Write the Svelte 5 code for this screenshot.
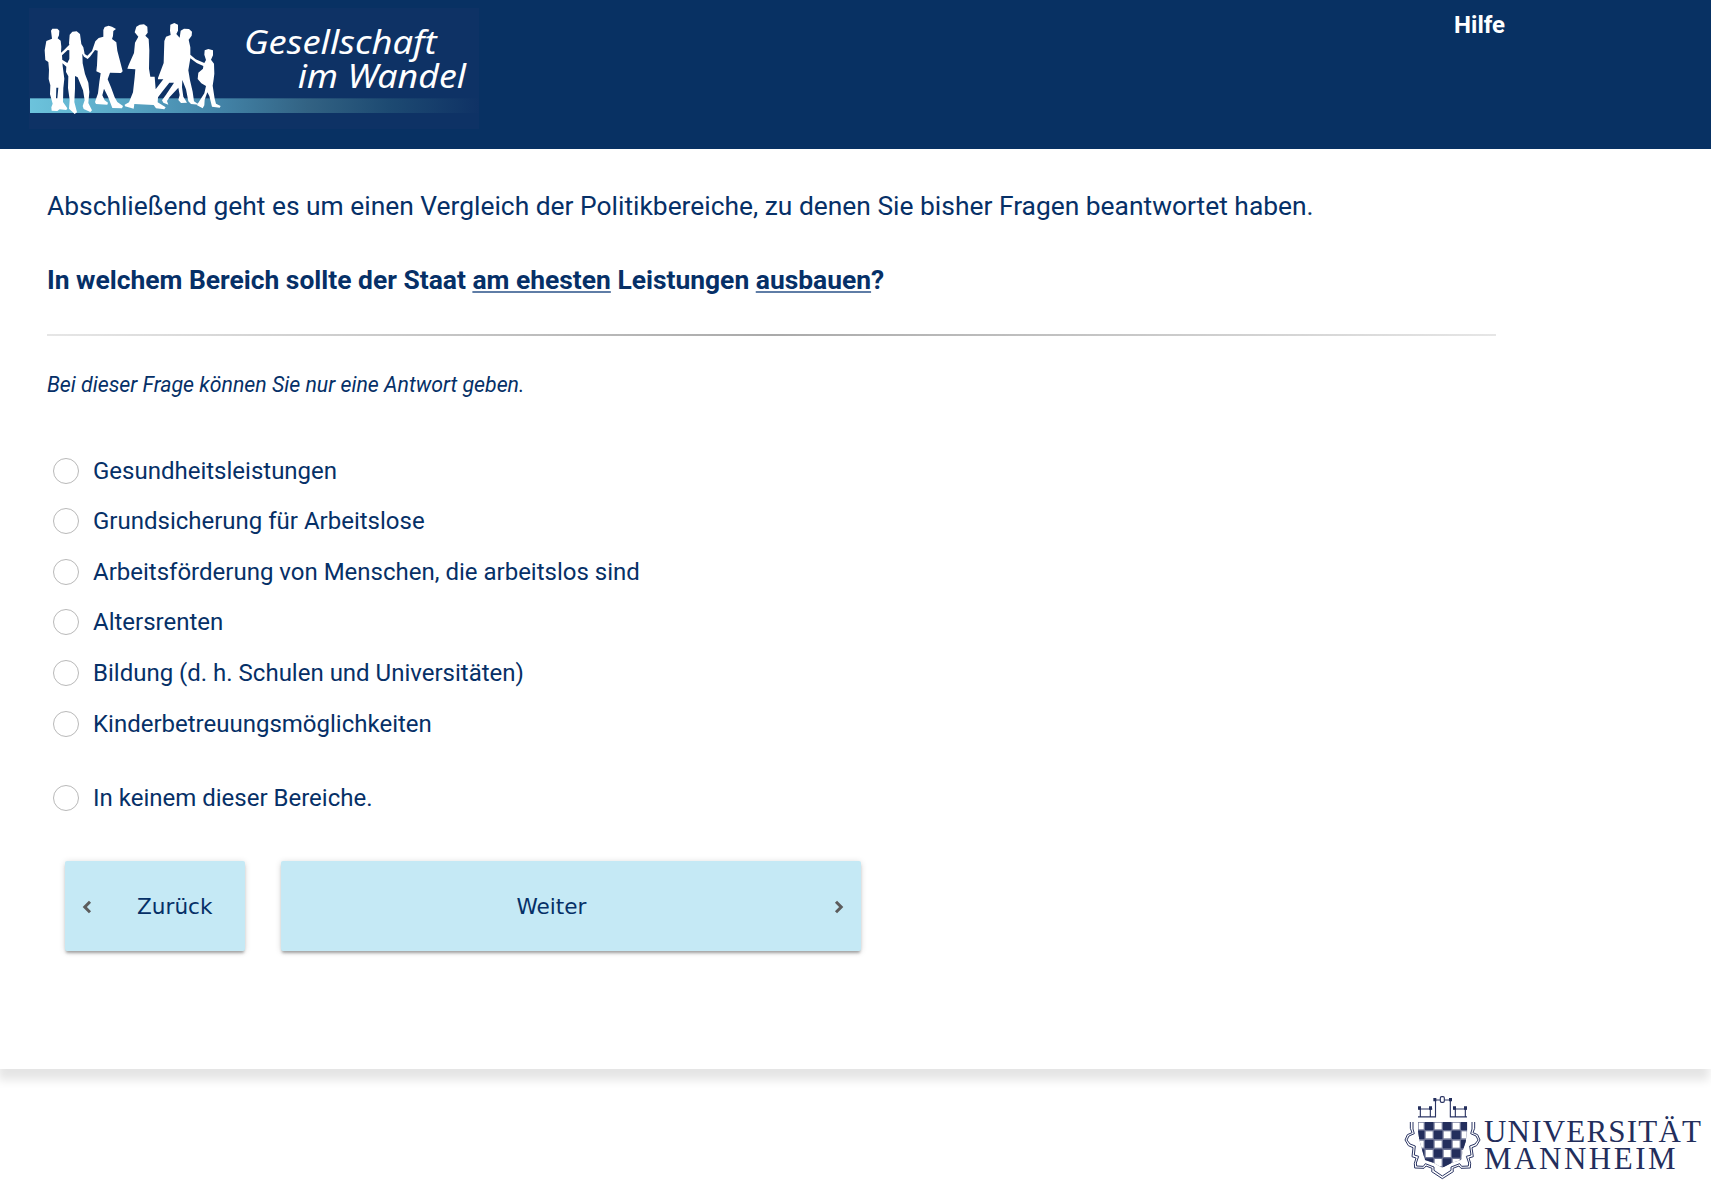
<script>
  const options = [
    'Gesundheitsleistungen',
    'Grundsicherung für Arbeitslose',
    'Arbeitsförderung von Menschen, die arbeitslos sind',
    'Altersrenten',
    'Bildung (d. h. Schulen und Universitäten)',
    'Kinderbetreuungsmöglichkeiten',
    'In keinem dieser Bereiche.'
  ];

  // Checkerboard cells of the university crest, clipped to the shield outline
  const columns = [
    [114, 19], [135, 25], [162, 25], [189, 25], [216, 25], [243, 19]
  ];
  const rows = [
    [186, 24], [212, 25], [240, 25], [268, 25], [295, 26]
  ];
</script>

<header>
  <svg class="brand" viewBox="27 24 1350 363" aria-label="Gesellschaft im Wandel">
    <defs>
      <linearGradient id="band" x1="0" x2="1">
        <stop offset="0" stop-color="#6cc3dc" />
        <stop offset=".16" stop-color="#5eaecb" />
        <stop offset=".42" stop-color="#4384a8" />
        <stop offset=".62" stop-color="#326283" />
        <stop offset=".8" stop-color="#1d4a72" />
        <stop offset="1" stop-color="#0f3265" />
      </linearGradient>
    </defs>
    <rect class="plate" x="27" y="24" width="1350" height="363" />
    <rect x="30" y="295" width="1347" height="44" fill="url(#band)" />
    <g class="people">
      <path d="M93 92 L97 86 L112 86 L118 92 L117 106 L113 115 L122 122 L124 140 L123 158 L130 152 L148 134 L147 130 L149 104 L157 95 L170 94 L180 102 L184 132 L190 142 L194 162 L202 167 L216 153 L226 124 L236 114 L250 110 L250 90 L254 81 L266 77 L276 80 L288 87 L280 93 L279 108 L276 117 L289 127 L292 152 L308 214 L303 219 L270 218 L263 238 L273 262 L284 292 L292 306 L309 318 L306 325 L277 324 L264 290 L252 266 L247 286 L254 301 L264 308 L262 314 L228 312 L225 306 L234 280 L238 246 L242 220 L229 214 L231 196 L233 152 L225 150 L210 170 L203 177 L192 170 L187 161 L188 190 L195 222 L205 248 L208 276 L205 309 L216 331 L211 336 L191 327 L188 318 L194 301 L189 271 L173 232 L165 228 L165 266 L163 306 L171 337 L164 342 L147 326 L149 300 L144 264 L145 229 L138 216 L139 200 L121 184 L123 177 L142 189 L148 177 L148 151 L143 150 L126 166 L128 198 L133 236 L130 264 L129 306 L142 325 L139 330 L119 328 L112 333 L95 332 L94 322 L98 311 L90 283 L91 256 L86 237 L87 209 L85 186 L76 180 L74 151 L79 123 L96 116Z" />
      <path d="M344 97 L349 80 L359 74 L372 73 L382 80 L383 98 L376 107 L386 117 L388 151 L387 206 L391 230 L404 230 L407 268 L430 238 L414 238 L414 234 L431 189 L433 123 L438 110 L452 105 L450 92 L451 74 L463 69 L474 74 L474 92 L469 102 L479 113 L482 92 L492 86 L507 87 L516 95 L515 107 L506 119 L511 142 L511 164 L527 178 L553 189 L558 180 L553 164 L554 151 L565 147 L579 151 L579 166 L573 179 L582 191 L583 221 L581 238 L578 257 L584 296 L588 311 L602 318 L599 323 L576 320 L568 288 L562 277 L554 299 L553 316 L548 325 L530 315 L536 307 L553 280 L558 258 L544 250 L533 237 L535 218 L549 206 L550 198 L530 189 L511 175 L505 211 L510 241 L518 275 L522 304 L537 314 L513 312 L505 304 L498 268 L487 240 L486 262 L490 290 L501 308 L483 309 L475 300 L479 285 L475 263 L449 291 L441 303 L445 314 L430 308 L426 301 L438 284 L462 248 L448 248 L426 276 L414 292 L413 307 L437 322 L433 328 L408 325 L401 315 L343 312 L341 326 L315 319 L314 314 L327 307 L339 277 L344 232 L346 208 L322 206 L326 195 L342 159 L345 128 L355 110Z" />
    </g>
    <path class="gap" d="M109 263 L115 263 L112 295 L108 295Z" />
    <text x="672" y="162" textLength="578" lengthAdjust="spacingAndGlyphs">Gesellschaft</text>
    <text x="833" y="263" textLength="505" lengthAdjust="spacingAndGlyphs">im Wandel</text>
  </svg>
  <a class="help" href="#hilfe">Hilfe</a>
</header>

<main>
  <p class="intro">Abschließend geht es um einen Vergleich der Politikbereiche, zu denen Sie bisher Fragen beantwortet haben.</p>
  <h1>In welchem Bereich sollte der Staat <u>am ehesten</u> Leistungen <u>ausbauen</u>?</h1>
  <div class="divider"></div>
  <p class="hint">Bei dieser Frage können Sie nur eine Antwort geben.</p>

  <div class="options">
    {#each options as option}
      <label>
        <input type="radio" name="bereich" />
        <span>{option}</span>
      </label>
    {/each}
  </div>

  <div class="actions">
    <button class="back">
      <svg viewBox="0 0 12 14"><path d="M9 1.8 L3.8 7 L9 12.2" /></svg>
      <span>Zurück</span>
    </button>
    <button class="next">
      <span>Weiter</span>
      <svg viewBox="0 0 12 14"><path d="M3 1.8 L8.2 7 L3 12.2" /></svg>
    </button>
  </div>
</main>

<footer>
  <svg class="university" viewBox="60 90 933 282" aria-label="Universität Mannheim">
    <defs>
      <clipPath id="shield">
        <path d="M114 186 H262 V212 L257 245 L249 270 L243 300 L216 308 L187 323 L160 308 L135 300 L127 272 L118 240 L114 212Z" />
      </clipPath>
    </defs>
    <g clip-path="url(#shield)">
      <rect class="ground" x="112" y="184" width="152" height="140" />
      {#each rows as [y, h], r}
        {#each columns as [x, w], c}
          {#if (r + c) % 2 === 0}
            <rect class="light" x={x + 2} y={y + 2} width={w - 4} height={h - 4} />
          {:else}
            <rect class="dark" x={x} y={y} width={w} height={h} />
          {/if}
        {/each}
      {/each}
    </g>
    <path class="line" d="M114 170.500 H166.500 V120 H181 M193 120 H211 V170.500 H261 M121 145 V169 M151 145 V169 M116 147 H157 M226 145 V169 M256 145 V169 M220 147 H261" />
    <rect class="line" x="181" y="110" width="12" height="17" rx="4" />
    <path class="dark" d="M114 139h9v10h-9z M147 139h9v10h-9z M219 139h9v10h-9z M252 139h9v10h-9z M160 114h9v10h-9z M207 114h9v10h-9z" />
    <path class="border" d="M91 186 V205 L96 218 L82 224 L75 240 L85 257 L99 263 L96 290 L108 294 L103 310 L104 324 L132 325 L138 318 L156 325 L155 335 L187 356 L220 335 L219 325 L237 318 L243 325 L271 324 L272 310 L267 294 L280 290 L276 263 L290 257 L300 240 L293 224 L279 218 L284 205 V186" />
    <path class="border" d="M99 186 V207 L103 221 L87 228 L81 240 L90 252 L106 258 L103 285 L116 289 L109 309 L110 318 L130 319 L136 311 L162 321 L162 331 L187 348 L213 331 L213 321 L239 311 L245 319 L265 318 L266 309 L259 289 L273 285 L269 258 L285 252 L294 240 L288 228 L272 221 L276 207 V186" />
    <text x="312" y="246" textLength="651">UNIVERSITÄT</text>
    <text x="312" y="326" textLength="575">MANNHEIM</text>
  </svg>
</footer>

<style>
  :global(body) {
    background: #fff;
    color: #063067;
    font-family: Roboto, sans-serif;
  }

  header {
    box-sizing: border-box;
    display: flex;
    justify-content: space-between;
    align-items: flex-start;
    height: 149px;
    padding: 8px 206px 0 29px;
    background: #083163;
  }

  .brand {
    width: 450px;
    height: 121px;
  }

  .plate,
  .gap {
    fill: #0e3265;
  }

  .people {
    fill: #fff;
  }

  .brand text {
    fill: #fff;
    font: italic 96px 'Noto Sans', 'Open Sans', sans-serif;
  }

  .help {
    margin-top: 3px;
    color: #fff;
    font-size: 24px;
    font-weight: 700;
    line-height: 28px;
    text-decoration: none;
  }

  main {
    box-sizing: border-box;
    height: 920px;
    padding: 41px 215px 0 47px;
    background: #fff;
    box-shadow: -2px 11px 9px #e5e5e5;
  }

  .intro {
    margin: 0;
    font-size: 26.38px;
    line-height: 32px;
  }

  h1 {
    margin: 42px 0 0;
    font-size: 26.42px;
    font-weight: 700;
    line-height: 32px;
  }

  u {
    text-decoration-thickness: 1.5px;
    text-decoration-color: #5f7da6;
    text-underline-offset: 2px;
    text-decoration-skip-ink: none;
  }

  .divider {
    height: 2px;
    margin-top: 38px;
    background: linear-gradient(90deg, #e6e6e6, #aaa 50%, #e6e6e6);
  }

  .hint {
    margin: 36px 0 0;
    font-size: 21.3px;
    font-style: italic;
    line-height: 26px;
  }

  .options {
    display: flex;
    flex-direction: column;
    margin-top: 47.2px;
    padding-left: 6px;
  }

  label {
    display: flex;
    align-items: center;
    gap: 14px;
    height: 50.67px;
    font-size: 24px;
    line-height: 28px;
  }

  label:last-child {
    margin-top: 23.8px;
  }

  input {
    appearance: none;
    box-sizing: border-box;
    width: 26px;
    height: 26px;
    margin: 0;
    border: 1px solid #b9b9b9;
    border-radius: 50%;
    background: #fff;
  }

  .actions {
    display: flex;
    gap: 36px;
    margin-top: 37.3px;
    padding-left: 18px;
  }

  button {
    box-sizing: border-box;
    display: flex;
    align-items: center;
    height: 90px;
    padding: 0;
    border: 0;
    border-radius: 2px;
    background: #c5e9f5;
    box-shadow: 0 3px 3px -1px rgba(0, 0, 0, 0.3), 0 1px 6px rgba(0, 0, 0, 0.16);
    color: #063067;
    font: 21.6px/26px 'DejaVu Sans', sans-serif;
  }

  button span {
    padding-top: 2px;
  }

  button svg {
    width: 12px;
    height: 14px;
    margin-top: 2px;
    fill: none;
    stroke: #5c5c5c;
    stroke-width: 3;
  }

  .back {
    width: 180px;
    padding: 0 32.5px 0 15.5px;
    justify-content: space-between;
  }

  .next {
    width: 580px;
    padding-right: 16px;
  }

  .next span {
    flex: 1;
    margin-right: 11px;
  }

  footer {
    display: flex;
    justify-content: flex-end;
    padding-top: 21px;
  }

  .university {
    width: 311px;
    height: 94px;
  }

  .university text {
    fill: #232e5c;
    font: 93px 'Liberation Serif', serif;
  }

  .dark {
    fill: #232e5c;
  }

  .light {
    fill: #fff;
  }

  .ground {
    fill: #6c7394;
  }

  .line {
    fill: none;
    stroke: #2c3664;
    stroke-width: 3.4;
  }

  .border {
    fill: none;
    stroke: #2c3664;
    stroke-width: 3;
  }
</style>
